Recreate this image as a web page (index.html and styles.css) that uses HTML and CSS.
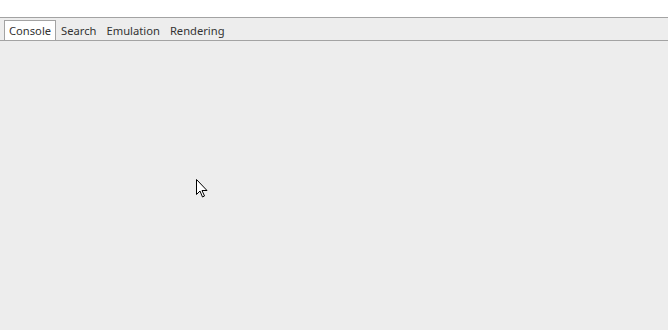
FILE: index.html
```html
<!DOCTYPE html>
<html>
<head>
<meta charset="utf-8">
<link rel="stylesheet" href="styles.css">
</head>
<body>
<div class="top"></div>
<div class="tabbar">
  <div class="tab active">Console</div>
  <div class="tab">Search</div>
  <div class="tab">Emulation</div>
  <div class="tab">Rendering</div>
</div>
<div class="content"></div>
<svg class="cursor" width="13" height="20" viewBox="0 0 13 20">
  <path d="M0.5 0.5 L0.5 15.5 L4 12 L6.5 18 L8.5 17 L6 11.5 L11 11.5 Z" fill="#fff" stroke="#000" stroke-width="1" stroke-linejoin="miter"/>
</svg>
</body>
</html>
```

FILE: styles.css
```css
html, body {
  margin: 0;
  padding: 0;
  height: 100%;
  background: #ededed;
  font-family: "Noto Sans", "Open Sans", sans-serif;
  font-size: 11.2px;
  color: #303030;
  overflow: hidden;
}
.top {
  height: 17px;
  background: #fff;
  border-bottom: 1px solid #a3a3a3;
}
.tabbar {
  display: flex;
  height: 22px;
  align-items: flex-end;
  padding-left: 4px;
  border-bottom: 1px solid #a3a3a3;
}
.tab {
  height: 20px;
  line-height: 20px;
  padding: 0 4px;
  box-sizing: border-box;
  border: 1px solid transparent;
  border-bottom: none;
  color: #333;
}
.tab.active {
  background: #fff;
  border-color: #a3a3a3;
}
.content {
  flex: 1;
}
.cursor {
  position: absolute;
  left: 196px;
  top: 179px;
}
```
